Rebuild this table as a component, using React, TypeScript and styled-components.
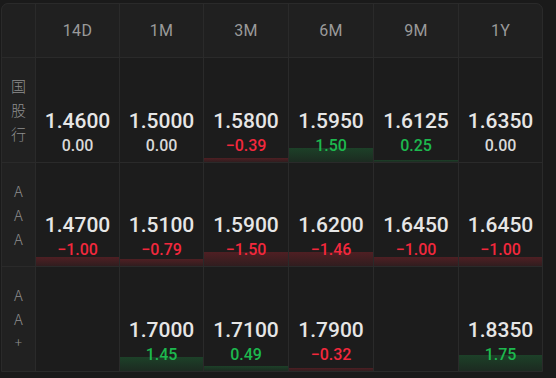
import { createGlobalStyle, styled } from 'styled-components';

type Quote = { value: string; change: number } | null;

const TENORS = ['14D', '1M', '3M', '6M', '9M', '1Y'];

const ROWS: { label: string[]; height: number; quotes: Quote[] }[] = [
  {
    label: ['国', '股', '行'],
    height: 104,
    quotes: [
      { value: '1.4600', change: 0 },
      { value: '1.5000', change: 0 },
      { value: '1.5800', change: -0.39 },
      { value: '1.5950', change: 1.5 },
      { value: '1.6125', change: 0.25 },
      { value: '1.6350', change: 0 },
    ],
  },
  {
    label: ['A', 'A', 'A'],
    height: 103,
    quotes: [
      { value: '1.4700', change: -1.0 },
      { value: '1.5100', change: -0.79 },
      { value: '1.5900', change: -1.5 },
      { value: '1.6200', change: -1.46 },
      { value: '1.6450', change: -1.0 },
      { value: '1.6450', change: -1.0 },
    ],
  },
  {
    label: ['A', 'A', '+'],
    height: 104,
    quotes: [
      null,
      { value: '1.7000', change: 1.45 },
      { value: '1.7100', change: 0.49 },
      { value: '1.7900', change: -0.32 },
      null,
      { value: '1.8350', change: 1.75 },
    ],
  },
];

const GlobalStyle = createGlobalStyle`
  html, body {
    margin: 0;
    background: #1a1a1a;
  }
`;

function tone(change: number) {
  if (change > 0) return 'up';
  if (change < 0) return 'down';
  return 'flat';
}

function App() {
  return (
    <>
      <GlobalStyle />
      <StyledPage>
        <StyledTable>
          <StyledCorner />
          {TENORS.map((t) => (
            <StyledHead key={t}>{t}</StyledHead>
          ))}
          {ROWS.map((row, r) => (
            <StyledRowGroup key={r} $height={row.height}>
              <StyledLabel>
                {row.label.map((ch, i) => (
                  <StyledLabelChar key={i} $small={ch === '+'}>
                    {ch}
                  </StyledLabelChar>
                ))}
              </StyledLabel>
              {row.quotes.map((q, i) => (
                <StyledCell key={i}>
                  {q && q.change !== 0 && (
                    <StyledBar
                      $tone={tone(q.change)}
                      style={{ height: Math.max(2, Math.abs(q.change) * 9.4) }}
                    />
                  )}
                  {q && (
                    <>
                      <StyledValue>{q.value}</StyledValue>
                      <StyledChange $tone={tone(q.change)}>
                        {q.change < 0 ? '−' : ''}
                        {Math.abs(q.change).toFixed(2)}
                      </StyledChange>
                    </>
                  )}
                </StyledCell>
              ))}
            </StyledRowGroup>
          ))}
        </StyledTable>
      </StyledPage>
    </>
  );
}

export default App;

const StyledPage = styled.div`
  padding: 3px 0 0 1px;
  font-family: Roboto, 'Noto Sans CJK SC', sans-serif;
`;

const StyledTable = styled.div`
  display: grid;
  grid-template-columns: 33px 83px 83px 84px 84px 84px 83px;
  grid-template-rows: 53px;
  gap: 1px;
  width: max-content;
  background: #2a2a2a;
  border: 1px solid #2a2a2a;
  border-radius: 7px 7px 0 0;
  overflow: hidden;
`;

const StyledCorner = styled.div`
  background: #202020;
`;

const StyledHead = styled.div`
  display: flex;
  align-items: center;
  justify-content: center;
  background: #202020;
  color: #9a9a9a;
  font-size: 16px;
  letter-spacing: 0.3px;
`;

const StyledRowGroup = styled.div<{ $height: number }>`
  display: contents;

  & > * {
    height: ${(p) => p.$height}px;
  }
`;

const StyledLabel = styled.div`
  display: flex;
  flex-direction: column;
  align-items: center;
  justify-content: center;
  background: #212121;
  color: #8e8e8e;
  font-size: 15px;
  font-family: 'Noto Sans CJK SC', Roboto, sans-serif;
`;

const StyledLabelChar = styled.span<{ $small: boolean }>`
  height: 24px;
  line-height: 24px;
  font-size: ${(p) => (p.$small ? '13px' : '15px')};
  font-family: ${(p) => (p.$small ? 'Roboto, sans-serif' : 'inherit')};
  font-weight: 300;
`;

const StyledCell = styled.div`
  position: relative;
  display: flex;
  flex-direction: column;
  align-items: center;
  justify-content: flex-end;
  padding-bottom: 6px;
  box-sizing: border-box;
  background: #1c1c1c;
`;

const StyledBar = styled.div<{ $tone: string }>`
  position: absolute;
  left: 0;
  right: 0;
  bottom: 0;
  background: ${(p) =>
    p.$tone === 'up'
      ? 'linear-gradient(to bottom, rgba(30, 170, 75, 0.26), rgba(30, 170, 75, 0.1))'
      : 'linear-gradient(to bottom, rgba(225, 40, 55, 0.26), rgba(225, 40, 55, 0.1))'};
`;

const StyledValue = styled.div`
  position: relative;
  color: #e6e6e6;
  font-size: 21px;
  font-weight: 500;
  line-height: 26px;
`;

const StyledChange = styled.div<{ $tone: string }>`
  position: relative;
  margin-top: 2px;
  color: ${(p) => (p.$tone === 'up' ? '#1db84e' : p.$tone === 'down' ? '#f2283c' : '#d8d8d8')};
  font-size: 16px;
  font-weight: 500;
  line-height: 20px;
`;
